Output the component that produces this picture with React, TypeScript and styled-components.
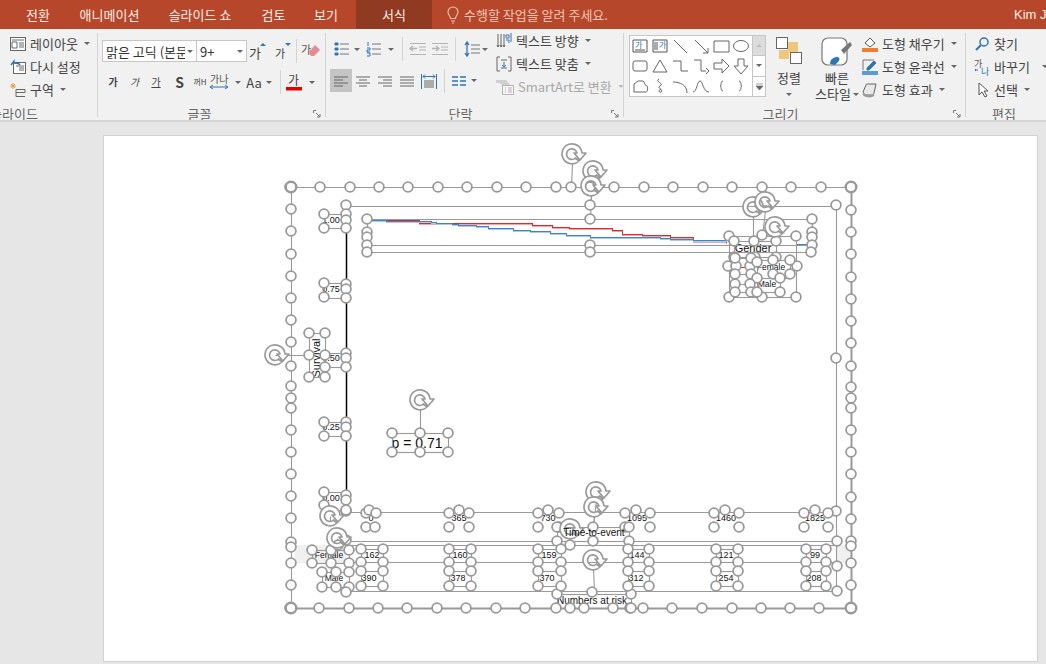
import React from 'react';
import styled, { createGlobalStyle } from 'styled-components';

const GlobalStyle = createGlobalStyle`
  html, body {
    margin: 0;
    padding: 0;
    width: 1046px;
    height: 664px;
    overflow: hidden;
    background: #e6e6e6;
    font-family: "Noto Sans CJK KR", "Liberation Sans", sans-serif;
  }
`;

const Page = styled.div`
  width: 1046px;
  height: 664px;
  display: flex;
  flex-direction: column;
  overflow: hidden;
`;

const TabBar = styled.div`
  height: 29px;
  flex: none;
  background: #b7472a;
  display: flex;
  align-items: stretch;
  color: #fbeee9;
  font-size: 13px;
  white-space: nowrap;
`;

const Tab = styled.div<{ $w: number; $active?: boolean }>`
  width: ${(p) => p.$w}px;
  flex: none;
  display: flex;
  align-items: center;
  justify-content: center;
  background: ${(p) => (p.$active ? '#913a22' : 'transparent')};
`;

const TellMe = styled.div`
  flex: 1;
  display: flex;
  align-items: center;
  gap: 4px;
  padding-left: 14px;
  color: #efc4b5;
`;

const UserName = styled.div`
  width: 32px;
  overflow: hidden;
  display: flex;
  align-items: center;
  font-family: "Liberation Sans", sans-serif;
  font-size: 13px;
`;

const Ribbon = styled.div`
  height: 93px;
  flex: none;
  box-sizing: border-box;
  background: #f1f1f1;
  border-bottom: 2px solid #d6d6d6;
  display: flex;
  color: #444;
  font-size: 13px;
  white-space: nowrap;
`;

const Group = styled.div<{ $w: number }>`
  width: ${(p) => p.$w}px;
  flex: none;
  display: flex;
  flex-direction: column;
  overflow: hidden;
`;

const GroupBody = styled.div<{ $pl?: number; $pt?: number }>`
  height: 73px;
  box-sizing: border-box;
  flex: none;
  display: flex;
  padding-left: ${(p) => p.$pl ?? 0}px;
  padding-top: ${(p) => p.$pt ?? 3}px;
`;

const GroupFoot = styled.div`
  height: 18px;
  box-sizing: border-box;
  flex: none;
  display: flex;
  align-items: center;
  padding: 5px 4px 0 0;
  line-height: 13px;
  color: #666;
`;

const FootText = styled.span<{ $shift?: number }>`
  flex: 1;
  text-align: center;
  padding-right: ${(p) => p.$shift ?? 12}px;
`;

const CutLabel = styled.span`
  margin-left: -10px;
`;

const GroupSep = styled.div`
  width: 1px;
  flex: none;
  margin: 4px 0 3px;
  background: #d4d4d4;
`;

const Stack = styled.div<{ $w?: number }>`
  display: flex;
  flex-direction: column;
  ${(p) => (p.$w ? `width: ${p.$w}px; flex: none;` : '')}
`;

const Cmd = styled.div<{ $off?: boolean }>`
  height: 23px;
  display: flex;
  align-items: center;
  gap: 4px;
  color: ${(p) => (p.$off ? '#a8a8a8' : '#444')};
`;

const Caret = styled.i<{ $off?: boolean; $ml?: number; $up?: boolean }>`
  display: inline-block;
  flex: none;
  width: 0;
  height: 0;
  margin-left: ${(p) => p.$ml ?? 2}px;
  border-left: 3px solid transparent;
  border-right: 3px solid transparent;
  border-top: 3px solid ${(p) => (p.$off ? '#bdbdbd' : '#666')};
  transform: ${(p) => (p.$up ? 'rotate(180deg)' : 'none')};
`;

const ToolRow = styled.div<{ $h: number; $mt?: number }>`
  height: ${(p) => p.$h}px;
  margin-top: ${(p) => p.$mt ?? 0}px;
  display: flex;
  align-items: center;
  flex: none;
`;

const Tool = styled.div<{ $w: number; $on?: boolean; $h?: number }>`
  width: ${(p) => p.$w}px;
  height: ${(p) => p.$h ?? 22}px;
  flex: none;
  display: flex;
  align-items: center;
  justify-content: center;
  gap: 1px;
  background: ${(p) => (p.$on ? '#c4c4c4' : 'transparent')};
`;

const ToolSep = styled.div<{ $h?: number; $ml: number; $mr: number }>`
  width: 1px;
  height: ${(p) => p.$h ?? 24}px;
  flex: none;
  margin: 0 ${(p) => p.$mr}px 0 ${(p) => p.$ml}px;
  background: #d4d4d4;
`;

const ComboBox = styled.div<{ $w: number }>`
  width: ${(p) => p.$w}px;
  height: 22px;
  box-sizing: border-box;
  flex: none;
  background: #fff;
  border: 1px solid #c6c6c6;
  display: flex;
  align-items: center;
  padding: 0 3px;
  justify-content: space-between;
  margin-right: -1px;
`;

const ComboText = styled.span`
  flex: 1;
  overflow: hidden;
  color: #333;
`;

const Glyph = styled.span<{ $size: number; $bold?: boolean; $under?: boolean; $italic?: boolean }>`
  font-size: ${(p) => p.$size}px;
  font-weight: ${(p) => (p.$bold ? 700 : 400)};
  font-style: ${(p) => (p.$italic ? 'italic' : 'normal')};
  text-decoration: ${(p) => (p.$under ? 'underline' : 'none')};
  color: #444;
  line-height: 1;
`;

const Gallery = styled.div`
  width: 137px;
  height: 62px;
  margin: 3px 0 0 5px;
  box-sizing: border-box;
  flex: none;
  display: flex;
  background: #fff;
  border: 1px solid #c6c6c6;
`;

const ShapeGrid = styled.div`
  width: 122px;
  flex: none;
  display: grid;
  grid-template-columns: repeat(6, 20.2px);
  grid-auto-rows: 20px;
`;

const ShapeCell = styled.div`
  display: flex;
  align-items: center;
  justify-content: center;
`;

const GalleryScroll = styled.div`
  flex: 1;
  display: flex;
  flex-direction: column;
  border-left: 1px solid #c6c6c6;
`;

const ScrollBtn = styled.div<{ $grey?: boolean; $last?: boolean }>`
  flex: 1;
  display: flex;
  align-items: center;
  justify-content: center;
  background: ${(p) => (p.$grey ? '#dcdcdc' : '#fff')};
  border-bottom: ${(p) => (p.$last ? 'none' : '1px solid #c6c6c6')};
`;

const BigCmd = styled.div<{ $w: number }>`
  width: ${(p) => p.$w}px;
  flex: none;
  display: flex;
  flex-direction: column;
  align-items: center;
  padding-top: 5px;
  line-height: 16px;
`;

const BigLine = styled.div`
  display: flex;
  align-items: center;
  height: 16px;
`;

const BigIcon = styled.svg<{ $mb: number }>`
  margin-bottom: ${(p) => p.$mb}px;
  flex: none;
`;

const Main = styled.div`
  flex: 1;
  padding: 13px 8px 2px 103px;
  display: flex;
  background: #e6e6e6;
`;

const Slide = styled.div`
  position: relative;
  flex: 1;
  background: #fff;
  box-shadow: inset 0 0 0 1px #d2d2d2;
  font-family: "Liberation Sans", sans-serif;
  color: #111;
`;

const Overlay = styled.svg`
  position: absolute;
  left: 0;
  top: 0;
  width: 100%;
  height: 100%;
`;

const SlideText = styled.div.attrs<{ $x: number; $y: number }>((p) => ({
  style: { left: p.$x - 103, top: p.$y - 135 },
}))<{ $x: number; $y: number; $size: number; $rot?: boolean }>`
  position: absolute;
  transform: translate(-50%, -50%) ${(p) => (p.$rot ? 'rotate(-90deg)' : '')};
  font-size: ${(p) => p.$size}px;
  line-height: 1;
  white-space: nowrap;
`;

const GREY = '#999';

/* small ribbon drawings */
const Ic = ({ w = 16, h = 16, children }: { w?: number; h?: number; children: React.ReactNode }) => (
  <svg width={w} height={h} viewBox={`0 0 ${w} ${h}`} fill="none" stroke="#666" strokeWidth="1" overflow="visible">
    {children}
  </svg>
);

const LayoutIcon = () => (
  <Ic>
    <rect x="0.5" y="1.5" width="15" height="13" fill="#fff" />
    <path d="M2 4h12M2 6h5v6H2zM9 7h5M9 9h5M9 11h5" />
  </Ic>
);
const ResetIcon = () => (
  <Ic>
    <rect x="3.5" y="3.5" width="12" height="11" fill="#fff" />
    <path d="M6 7h8M9 9h5M9 11h5" />
    <path d="M1 6l3-4v2c3 0 5 0 6 2" stroke="#2e75b6" strokeWidth="1.4" />
  </Ic>
);
const SectionIcon = () => (
  <Ic>
    <path d="M6 7.5h9v3H6zM6 10.5v4h9" />
    <path d="M3 1v6M0 4h6M1 2l4 4M5 2L1 6" stroke="#e6a23c" />
  </Ic>
);
const BulletsIcon = ({ numbered = false }: { numbered?: boolean }) => (
  <Ic>
    <path d="M6 3h9M6 8h9M6 13h9" stroke="#777" />
    {numbered ? (
      <path d="M2 1v4M1 7h3v2H1v2h3M1 12h3v3H1" stroke="#2e75b6" />
    ) : (
      <path d="M1 2h3v2H1zM1 7h3v2H1zM1 12h3v2H1z" fill="#2e75b6" stroke="#2e75b6" />
    )}
  </Ic>
);
const IndentIcon = ({ flip = false }: { flip?: boolean }) => (
  <Ic>
    <g stroke="#b4b4b4">
      <path d="M0 2.5h16M9 6h7M9 9h7M0 13.5h16" />
      <path d={flip ? 'M0 7.5h6M4 5l3 2.5L4 10' : 'M7 7.5H1M3 5L0 7.5 3 10'} strokeWidth="1.4" />
    </g>
  </Ic>
);
const LineSpaceIcon = () => (
  <Ic>
    <path d="M7 4h9M7 8h9M7 12h9" stroke="#777" />
    <path d="M3 2v12M1 4l2-3 2 3M1 12l2 3 2-3" stroke="#2e75b6" strokeWidth="1.3" />
  </Ic>
);
const AlignIcon = ({ kind }: { kind: 'l' | 'c' | 'r' | 'j' }) => {
  const d = {
    l: 'M1 4h14M1 7h9M1 10h14M1 13h9',
    c: 'M1 4h14M4 7h8M1 10h14M4 13h8',
    r: 'M1 4h14M6 7h9M1 10h14M6 13h9',
    j: 'M1 4h14M1 7h14M1 10h14M1 13h14',
  }[kind];
  return (
    <Ic>
      <path d={d} stroke="#666" />
    </Ic>
  );
};
const DistributedIcon = () => (
  <Ic>
    <path d="M3 8h10M3 10h10M3 12h10M3 14h10" stroke="#666" />
    <path d="M0.5 1v15M15.5 1v15M2 3.5h12M4 1.5L2 3.5l2 2M12 1.5l2 2-2 2" stroke="#2e75b6" />
  </Ic>
);
const ColumnsIcon = () => (
  <Ic w={14} h={12}>
    <path d="M0 2h6M8 2h6M0 6h6M8 6h6M0 10h6M8 10h6" stroke="#2e75b6" strokeWidth="1.4" />
  </Ic>
);
const TextDirIcon = () => (
  <Ic>
    <path d="M2 1v13M5 1v13M8 1v13M1 12l1 2 1-2M4 12l1 2 1-2M7 12l1 2 1-2" />
    <path d="M10 2h3v3h-3zM15 0v9M10 7h3v3" stroke="#2e75b6" />
  </Ic>
);
const TextFitIcon = () => (
  <Ic>
    <path d="M4 1H1v14h3M12 1h3v14h-3" />
    <path d="M5 4h6M5 12h6" />
    <path d="M8 6v5M6 9l2 2 2-2" stroke="#2e75b6" />
  </Ic>
);
const SmartArtIcon = () => (
  <Ic w={18} h={16}>
    <path d="M0 1h10l4 5H6L4 4H0z" fill="#cfcfcf" stroke="none" />
    <rect x="6.5" y="6.5" width="11" height="9" fill="#f6f6f6" stroke="#b5b5b5" />
    <path d="M9 9h1M12 9h4M9 11h1M12 11h4M9 13h1M12 13h4" stroke="#c8a8c8" />
  </Ic>
);

const shapePaths = [
  'M2 3h14v12H2zM4 13h10',
  'M2 3h14v12H2zM4 5v8M6 5v8',
  'M3 3l13 13',
  'M3 3l13 13M16 11v5h-5',
  'M2 4h15v11H2z',
  '',
  'M4 4h10a2 2 0 0 1 2 2v6a2 2 0 0 1-2 2H4a2 2 0 0 1-2-2V6a2 2 0 0 1 2-2z',
  'M9 3l7 12H2z',
  'M2 4h8v10h7',
  'M2 3h7v11h5M14 11l3 3-3 3',
  'M2 6h8V2l7 7-7 7v-4H2z',
  'M6 2h6v7h4l-7 8-7-8h4z',
  'M3 15V7l4-3h5c2 0 1 5 4 5 1 0 1 6-1 6z',
  'M8 2c-5 3 6 4 1 7-4 2 4 3 1 6-2 1-3-2 0-3',
  'M2 5c7 0 14 3 14 11',
  'M1 15c4 0 4-11 7-11s3 11 9 11',
  'M11 4C8 4 10 9 8 9c2 0 0 5 3 5',
  'M7 4c3 0 1 5 3 5-2 0 0 5-3 5',
];

const Shape = ({ d, i }: { d: string; i: number }) => (
  <svg width="18" height="18" viewBox="0 0 18 18" fill="none" stroke={i < 2 ? '#555' : '#666'}>
    {d ? <path d={d} /> : <ellipse cx="9" cy="9" rx="7.5" ry="5.5" />}
    {i === 0 && <text x="4" y="11" fontSize="8" fill="#2e75b6" stroke="none">가</text>}
    {i === 1 && <text x="8" y="11" fontSize="8" fill="#2e75b6" stroke="none">가</text>}
  </svg>
);

/* slide selection graphics, in page coordinates */
type Pt = [number, number];

const rails: number[][] = [
  [291, 187, 851, 187],
  [291, 187, 291, 608],
  [346, 206, 836, 206],
  [836, 206, 836, 591],
  [367, 219, 812, 219],
  [367, 245, 812, 245],
  [367, 252, 812, 252],
  [367, 219, 367, 252],
  [812, 219, 812, 252],
  [346, 512, 836, 512],
  [346, 541, 836, 541],
  [346, 545, 836, 545],
  [346, 562, 836, 562],
  [346, 591, 836, 591],
];

const boxes: number[][] = [
  [324, 214, 346, 228],
  [324, 283, 346, 298],
  [324, 353, 346, 367],
  [324, 422, 346, 436],
  [324, 492, 346, 510],
  [309, 333, 325, 377],
  [392, 433, 448, 452],
  [729, 236, 796, 297],
  [734, 241, 776, 257],
  [735, 258, 751, 274],
  [757, 260, 790, 278],
  [735, 284, 751, 292],
  [757, 278, 780, 292],
  [312, 550, 349, 563],
  [322, 572, 349, 587],
  [557, 527, 629, 541],
  [557, 594, 631, 608],
];

const handles: Pt[] = [
  ...[290, 320, 350, 379, 408, 438, 467, 497, 526, 556, 571, 590, 614, 644, 673, 703, 732, 762, 791, 821].map((x): Pt => [x, 187]),
  ...[290, 319, 349, 378, 407, 437, 466, 496, 525, 556, 570, 584, 613, 630, 643, 672, 702, 732, 761, 790, 819].map((x): Pt => [x, 608]),
  ...[209, 231, 254, 276, 298, 320, 342, 366, 386, 398, 408, 430, 452, 474, 496, 518, 542, 547, 563, 585].map((y): Pt => [291, y]),
  ...[210, 232, 254, 277, 299, 321, 343, 366, 387, 398, 408, 430, 452, 474, 497, 519, 541, 546, 563, 585].map((y): Pt => [851, y]),
  [346, 205], [590, 205], [836, 205], [836, 358], [836, 511], [346, 511],
  [367, 219], [367, 232], [367, 237], [367, 245], [367, 252],
  [812, 219], [812, 232], [812, 237], [812, 245], [811, 252],
  [590, 219], [590, 245], [590, 252],
  [324, 214], [324, 228], [346, 214], [346, 220], [346, 228],
  [324, 283], [324, 297], [346, 284], [346, 289], [346, 298],
  [346, 353], [346, 358], [346, 367], [325, 355], [325, 367],
  [324, 422], [324, 436], [346, 422], [346, 427], [346, 436],
  [324, 492], [324, 505], [346, 495], [346, 500], [346, 510],
  [309, 333], [325, 333], [309, 355], [325, 377], [309, 377],
  [392, 433], [420, 433], [448, 433], [392, 452], [420, 452], [448, 452],
  [729, 236], [762, 235], [796, 236], [728, 266], [797, 266], [729, 297], [762, 297], [796, 297],
  [734, 241], [754, 241], [776, 241], [734, 257], [755, 257], [776, 257],
  [736, 266], [750, 266], [735, 258], [751, 258], [735, 274], [751, 274],
  [757, 262], [773, 260], [790, 260], [757, 278], [773, 274], [790, 274], [780, 278],
  [735, 284], [750, 284], [735, 292], [751, 292], [757, 292], [780, 292],
  [312, 550], [331, 550], [349, 550], [312, 563], [331, 563], [349, 563],
  [322, 572], [336, 572], [349, 572], [322, 587], [336, 587], [349, 587], [346, 592],
  [346, 540], [338, 545],
  [366, 513], [369, 510], [376, 513], [366, 527], [375, 527],
  [449, 513], [459, 510], [469, 513], [449, 527], [469, 527],
  [538, 513], [548, 510], [559, 513], [538, 527], [559, 527],
  [625, 513], [636, 510], [650, 513], [625, 527], [650, 527],
  [714, 513], [725, 510], [739, 513], [714, 527], [739, 527],
  [804, 513], [815, 510], [828, 513], [804, 527], [828, 527],
  [557, 527], [593, 527], [629, 527], [557, 541], [593, 541], [629, 541], [570, 545],
  [837, 541], [837, 566], [837, 591],
  [557, 594], [592, 592], [631, 594], [631, 608],
];

// count-at-risk cells: two small boxes per column
[[361, 383], [449, 471], [538, 561], [628, 649], [716, 738], [806, 826]].forEach(([a, b]) => {
  boxes.push([a, 549, b, 562], [a, 571, b, 586]);
  [549, 562, 571, 586].forEach((y) => handles.push([a, y], [b, y]));
});

const corners: Pt[] = [[291, 187], [851, 187], [291, 608], [851, 608]];

const rotators: number[][] = [
  [572, 154, 571, 187],
  [593, 171, 590, 205],
  [591, 186, 590, 219],
  [420, 400, 420, 433],
  [753, 207, 753, 241],
  [765, 202, 762, 236],
  [775, 227, 775, 241],
  [596, 492, 593, 527],
  [594, 507, 593, 527],
  [570, 529, 570, 545],
  [593, 560, 594, 591],
  [330, 516, 330, 516],
  [337, 538, 337, 538],
];

// turn a list of km-curve points into horizontal-then-vertical steps
const stepped = (pts: Pt[]) => {
  const out: string[] = [];
  pts.forEach(([x, y], i) => {
    if (i > 0) out.push(`${x},${pts[i - 1][1]}`);
    out.push(`${x},${y}`);
  });
  return out.join(' ');
};

const redCurve = stepped([
  [372, 220], [419, 223], [532, 225], [552, 227], [569, 228], [612, 230], [622, 234], [642, 235], [670, 237], [693, 241], [726, 243],
]);
const blueCurve = stepped([
  [372, 220], [386, 221], [431, 222], [436, 223], [452, 224], [458, 225], [476, 226], [488, 228], [513, 230], [530, 231], [550, 233], [566, 235], [590, 237], [660, 238], [670, 239], [693, 240], [726, 241],
]);
const blueTail = stepped([[797, 244], [807, 245], [812, 245]]);

const RotateHandle = ({ x, y }: { x: number; y: number }) => (
  <g transform={`translate(${x} ${y})`} fill="#fff" stroke={GREY} strokeWidth="1.7" strokeLinejoin="round">
    <path d="M3.5 4 L7 7 A10 10 0 1 1 10 -1 L14 -1 L8 6 L2 -1 L5 -1 A5.3 5.3 0 1 0 3.5 4 Z" />
  </g>
);

const Launcher = () => (
  <svg width="8" height="8" viewBox="0 0 8 8" fill="none" stroke="#777">
    <path d="M0.5 3V0.5H3M3 3l4 4M7 4v3H4" />
  </svg>
);

const RibbonGroupSlides = () => (
  <Group $w={97}>
    <GroupBody $pl={10}>
      <Stack>
        <Cmd><LayoutIcon />레이아웃<Caret /></Cmd>
        <Cmd><ResetIcon />다시 설정</Cmd>
        <Cmd><SectionIcon />구역<Caret /></Cmd>
      </Stack>
    </GroupBody>
    <GroupFoot><CutLabel>슬라이드</CutLabel></GroupFoot>
  </Group>
);

const RibbonGroupFont = () => (
  <Group $w={227}>
    <GroupBody $pl={4} $pt={0}>
      <Stack>
        <ToolRow $h={22} $mt={11}>
          <ComboBox $w={95}><ComboText>맑은 고딕 (본문</ComboText><Caret /></ComboBox>
          <ComboBox $w={51}><ComboText>9+</ComboText><Caret /></ComboBox>
          <Tool $w={25}>
            <svg width="22" height="20" viewBox="0 0 22 20"><path d="M12 5l3-3 3 3z" fill="#2e75b6" /><text x="1" y="17" fontSize="13" fill="#444">가</text></svg>
          </Tool>
          <Tool $w={25}>
            <svg width="22" height="20" viewBox="0 0 22 20"><path d="M12 2l3 3 3-3z" fill="#2e75b6" /><text x="2" y="17" fontSize="11" fill="#444">가</text></svg>
          </Tool>
          <ToolSep $ml={0} $mr={0} />
          <Tool $w={30}>
            <svg width="22" height="20" viewBox="0 0 22 20"><text x="0" y="13" fontSize="11" fill="#555">가</text><path d="M8 11l6-7 5 5-6 6H10z" fill="#e58a92" /></svg>
          </Tool>
        </ToolRow>
        <ToolRow $h={22} $mt={9}>
          <Tool $w={22}><Glyph $size={10} $bold>가</Glyph></Tool>
          <Tool $w={21}><Glyph $size={10} $italic>가</Glyph></Tool>
          <Tool $w={22}><Glyph $size={10} $under>가</Glyph></Tool>
          <Tool $w={25}><Glyph $size={14} $bold>S</Glyph></Tool>
          <Tool $w={16}><Glyph $size={8}>꺼H</Glyph></Tool>
          <Tool $w={33}>
            <svg width="24" height="20" viewBox="0 0 24 20" fill="none"><text x="2" y="11" fontSize="10" fill="#555" stroke="none">가나</text><path d="M2 15h18M5 13l-3 2 3 2M17 13l3 2-3 2" stroke="#2e75b6" /></svg>
            <Caret />
          </Tool>
          <Tool $w={36}><Glyph $size={13}>Aa</Glyph><Caret $ml={3} /></Tool>
          <ToolSep $ml={3} $mr={3} />
          <Tool $w={32}>
            <svg width="18" height="20" viewBox="0 0 18 20"><text x="2" y="13" fontSize="12" fill="#444">가</text><rect x="0" y="15" width="16" height="3.5" fill="#e60000" /></svg>
            <Caret $ml={4} />
          </Tool>
        </ToolRow>
      </Stack>
    </GroupBody>
    <GroupFoot><FootText>글꼴</FootText><Launcher /></GroupFoot>
  </Group>
);

const RibbonGroupParagraph = () => (
  <Group $w={297}>
    <GroupBody $pl={4} $pt={0}>
      <Stack $w={166}>
        <ToolRow $h={22} $mt={9}>
          <Tool $w={24}><BulletsIcon /></Tool>
          <Caret $ml={0} />
          <Tool $w={28}><BulletsIcon numbered /></Tool>
          <Caret $ml={0} />
          <ToolSep $ml={8} $mr={4} />
          <Tool $w={22}><IndentIcon /></Tool>
          <Tool $w={22}><IndentIcon flip /></Tool>
          <ToolSep $ml={4} $mr={5} />
          <Tool $w={22}><LineSpaceIcon /></Tool>
          <Caret $ml={-1} />
        </ToolRow>
        <ToolRow $h={23} $mt={9}>
          <Tool $w={22} $h={23} $on><AlignIcon kind="l" /></Tool>
          <Tool $w={22}><AlignIcon kind="c" /></Tool>
          <Tool $w={22}><AlignIcon kind="r" /></Tool>
          <Tool $w={22}><AlignIcon kind="j" /></Tool>
          <Tool $w={22}><DistributedIcon /></Tool>
          <ToolSep $ml={4} $mr={3} />
          <Tool $w={22}><ColumnsIcon /></Tool>
          <Caret $ml={1} />
        </ToolRow>
      </Stack>
      <Stack>
        <Cmd><TextDirIcon />텍스트 방향<Caret /></Cmd>
        <Cmd><TextFitIcon />텍스트 맞춤<Caret /></Cmd>
        <Cmd $off><SmartArtIcon />SmartArt로 변환<Caret $off /></Cmd>
      </Stack>
    </GroupBody>
    <GroupFoot><FootText $shift={16}>단락</FootText><Launcher /></GroupFoot>
  </Group>
);

const FillIcon = () => (
  <Ic>
    <path d="M3 7l5-5 5 5-5 4z" fill="#fff" stroke="#555" />
    <rect x="0" y="12" width="16" height="4" fill="#ed7d31" stroke="none" />
  </Ic>
);
const OutlineIcon = () => (
  <Ic>
    <path d="M1 11V1h11" stroke="#777" />
    <path d="M5 9l7-7 2 2-7 7H5z" fill="#2e75b6" stroke="#2e75b6" />
    <rect x="0" y="12" width="16" height="4" fill="#5b9bd5" stroke="none" />
  </Ic>
);
const EffectIcon = () => (
  <Ic>
    <path d="M1 10l3-7c0-1 1-1 2-1h8l-2 9c0 1-1 2-2 2H3z" fill="#e8e8e8" stroke="#666" />
    <path d="M1 12c3 3 8 3 11 1" stroke="#999" strokeWidth="2" />
  </Ic>
);

const RibbonGroupDrawing = () => (
  <Group $w={341}>
    <GroupBody $pt={3}>
      <Gallery>
        <ShapeGrid>
          {shapePaths.map((d, i) => (
            <ShapeCell key={i}><Shape d={d} i={i} /></ShapeCell>
          ))}
        </ShapeGrid>
        <GalleryScroll>
          <ScrollBtn $grey><Caret $ml={0} $up $off /></ScrollBtn>
          <ScrollBtn><Caret $ml={0} /></ScrollBtn>
          <ScrollBtn $last><svg width="7" height="7"><path d="M0 1h7M0 3l3.5 4L7 3z" fill="#666" stroke="#666" strokeWidth="0.6" /></svg></ScrollBtn>
        </GalleryScroll>
      </Gallery>
      <BigCmd $w={46}>
        <BigIcon $mb={6} width="28" height="27" viewBox="0 0 28 27">
          <rect x="13" y="5" width="10" height="10" fill="#efc77c" />
          <rect x="4" y="13" width="10" height="9" fill="#efc77c" />
          <rect x="1.5" y="0.5" width="11" height="11" fill="#fff" stroke="#666" />
          <rect x="15.5" y="15.5" width="11" height="11" fill="#fff" stroke="#666" />
        </BigIcon>
        <BigLine>정렬</BigLine>
        <BigLine><Caret $ml={0} /></BigLine>
      </BigCmd>
      <BigCmd $w={50}>
        <BigIcon $mb={3} width="32" height="30" viewBox="0 0 32 30">
          <rect x="1" y="1" width="25" height="27" rx="6" fill="#fff" stroke="#777" strokeWidth="1.2" />
          <path d="M20 13l9-8 2 3-8 9z" fill="#777" />
          <path d="M9 27c0-5 4-7 7-7 3 0 3 3 1 5l-3 3z" fill="#2e75b6" />
        </BigIcon>
        <BigLine>빠른</BigLine>
        <BigLine>스타일<Caret /></BigLine>
      </BigCmd>
      <Stack>
        <Cmd><FillIcon />도형 채우기<Caret /></Cmd>
        <Cmd><OutlineIcon />도형 윤곽선<Caret /></Cmd>
        <Cmd><EffectIcon />도형 효과<Caret /></Cmd>
      </Stack>
    </GroupBody>
    <GroupFoot><FootText $shift={16}>그리기</FootText><Launcher /></GroupFoot>
  </Group>
);

const RibbonGroupEditing = () => (
  <Group $w={80}>
    <GroupBody $pl={8} $pt={3}>
      <Stack>
        <Cmd>
          <Ic><circle cx="10" cy="6" r="4" stroke="#2e75b6" strokeWidth="1.5" /><path d="M7 9l-5 5" stroke="#2e75b6" strokeWidth="2" /></Ic>
          찾기
        </Cmd>
        <Cmd>
          <svg width="16" height="18" viewBox="0 0 16 18" fill="none" overflow="visible"><text x="0" y="9" fontSize="9" fill="#555" stroke="none">가</text><text x="7" y="17" fontSize="9" fill="#2e75b6" stroke="none">나</text><path d="M1 12h3M2 11l-1 1 1 1" stroke="#2e75b6" /></svg>
          바꾸기<Caret $ml={8} />
        </Cmd>
        <Cmd>
          <Ic><path d="M5 1v12l3-3 3 5 2-1-3-5h4z" fill="#fff" stroke="#555" /></Ic>
          선택<Caret />
        </Cmd>
      </Stack>
    </GroupBody>
    <GroupFoot><FootText $shift={0}>편집</FootText></GroupFoot>
  </Group>
);

const yTicks: [string, number][] = [['1.00', 220], ['0.75', 289], ['0.50', 358], ['0.25', 427], ['0.00', 498]];
const xTicks: [string, number][] = [['0', 371], ['365', 459], ['730', 548], ['1095', 637], ['1460', 726], ['1825', 815]];
const risk: [string, string, number, number][] = [
  ['162', '390', 372, 369],
  ['160', '378', 460, 458],
  ['159', '370', 549, 547],
  ['144', '312', 637, 636],
  ['121', '254', 726, 726],
  ['99', '208', 815, 814],
];

function App() {
  return (
    <Page>
      <GlobalStyle />
      <TabBar>
        <Tab $w={26} />
        <Tab $w={24}>전환</Tab>
        <Tab $w={30} />
        <Tab $w={59}>애니메이션</Tab>
        <Tab $w={29} />
        <Tab $w={64}>슬라이드 쇼</Tab>
        <Tab $w={30} />
        <Tab $w={23}>검토</Tab>
        <Tab $w={30} />
        <Tab $w={22}>보기</Tab>
        <Tab $w={19} />
        <Tab $w={76} $active>서식</Tab>
        <TellMe>
          <svg width="14" height="18" viewBox="0 0 14 18" fill="none" stroke="#efc4b5" strokeWidth="1.1">
            <path d="M4.5 12.5C4.5 10 2 9 2 6a5 5 0 0 1 10 0c0 3-2.5 4-2.5 6.5zM5 15h4M6 17h2" />
          </svg>
          수행할 작업을 알려 주세요.
        </TellMe>
        <UserName>Kim Ji</UserName>
      </TabBar>
      <Ribbon>
        <RibbonGroupSlides />
        <GroupSep />
        <RibbonGroupFont />
        <GroupSep />
        <RibbonGroupParagraph />
        <GroupSep />
        <RibbonGroupDrawing />
        <GroupSep />
        <RibbonGroupEditing />
      </Ribbon>
      <Main>
        <Slide>
          <Overlay viewBox="103 135 935 527">
            <rect x="295" y="545" width="51" height="18" fill="#f0f0f0" />
            <rect x="837" y="545" width="14" height="18" fill="#f0f0f0" />
            <path d="M346.5 226V500" stroke="#000" strokeWidth="1.5" />
            <g fill="none" shapeRendering="crispEdges">
              <polyline points={redCurve} stroke="#f4a6a6" transform="translate(0 1)" />
              <polyline points={redCurve} stroke="#e8262a" />
              <polyline points={blueCurve} stroke="#a9cbe8" transform="translate(0 1)" />
              <polyline points={blueCurve} stroke="#3d85c6" />
              <polyline points={blueTail} stroke="#3d85c6" />
            </g>
            <path d="M741 267.5h7" stroke="#e8262a" />
            <path d="M741 284.5h7" stroke="#3d85c6" />
          </Overlay>
          {yTicks.map(([t, y]) => (
            <SlideText key={t} $x={331} $y={y} $size={9}>{t}</SlideText>
          ))}
          {xTicks.map(([t, x]) => (
            <SlideText key={t} $x={x} $y={518} $size={9}>{t}</SlideText>
          ))}
          {risk.map(([a, b, xa, xb]) => (
            <React.Fragment key={a}>
              <SlideText $x={xa} $y={555} $size={9}>{a}</SlideText>
              <SlideText $x={xb} $y={578} $size={9}>{b}</SlideText>
            </React.Fragment>
          ))}
          <SlideText $x={316} $y={358} $size={11} $rot>Survival</SlideText>
          <SlideText $x={417} $y={443} $size={14}>p = 0.71</SlideText>
          <SlideText $x={753} $y={248} $size={11}>Gender</SlideText>
          <SlideText $x={771} $y={267} $size={8.5}>Female</SlideText>
          <SlideText $x={767} $y={284} $size={8.5}>Male</SlideText>
          <SlideText $x={329} $y={555} $size={8.5}>Female</SlideText>
          <SlideText $x={334} $y={578} $size={8.5}>Male</SlideText>
          <SlideText $x={592} $y={601} $size={10}>Numbers at risk</SlideText>
          <Overlay viewBox="103 135 935 527">
            <g stroke={GREY} strokeWidth="1.1" fill="none" transform="translate(0.5 0.5)">
              {rails.map((r, i) => (
                <line key={i} x1={r[0]} y1={r[1]} x2={r[2]} y2={r[3]} />
              ))}
              {boxes.map((b, i) => (
                <rect key={i} x={b[0]} y={b[1]} width={b[2] - b[0]} height={b[3] - b[1]} />
              ))}
              <path d="M851 187V608M291 608H851" strokeWidth="2" />
              <path d="M275 355H309" />
              {rotators.map((r, i) => (
                <line key={i} x1={r[0]} y1={r[1] + 8} x2={r[2]} y2={r[3]} />
              ))}
            </g>
            <g fill="#fff" stroke={GREY} strokeWidth="1.8">
              {handles.map(([x, y], i) => (
                <circle key={i} cx={x} cy={y} r="4.9" />
              ))}
              {corners.map(([x, y]) => (
                <circle key={`${x}-${y}`} cx={x} cy={y} r="5.3" strokeWidth="2.4" />
              ))}
            </g>
            <RotateHandle x={275} y={355} />
            {rotators.map((r, i) => (
              <RotateHandle key={i} x={r[0]} y={r[1]} />
            ))}
          </Overlay>
          <SlideText $x={594} $y={533} $size={10}>Time-to-event</SlideText>
        </Slide>
      </Main>
    </Page>
  );
}

export default App;
